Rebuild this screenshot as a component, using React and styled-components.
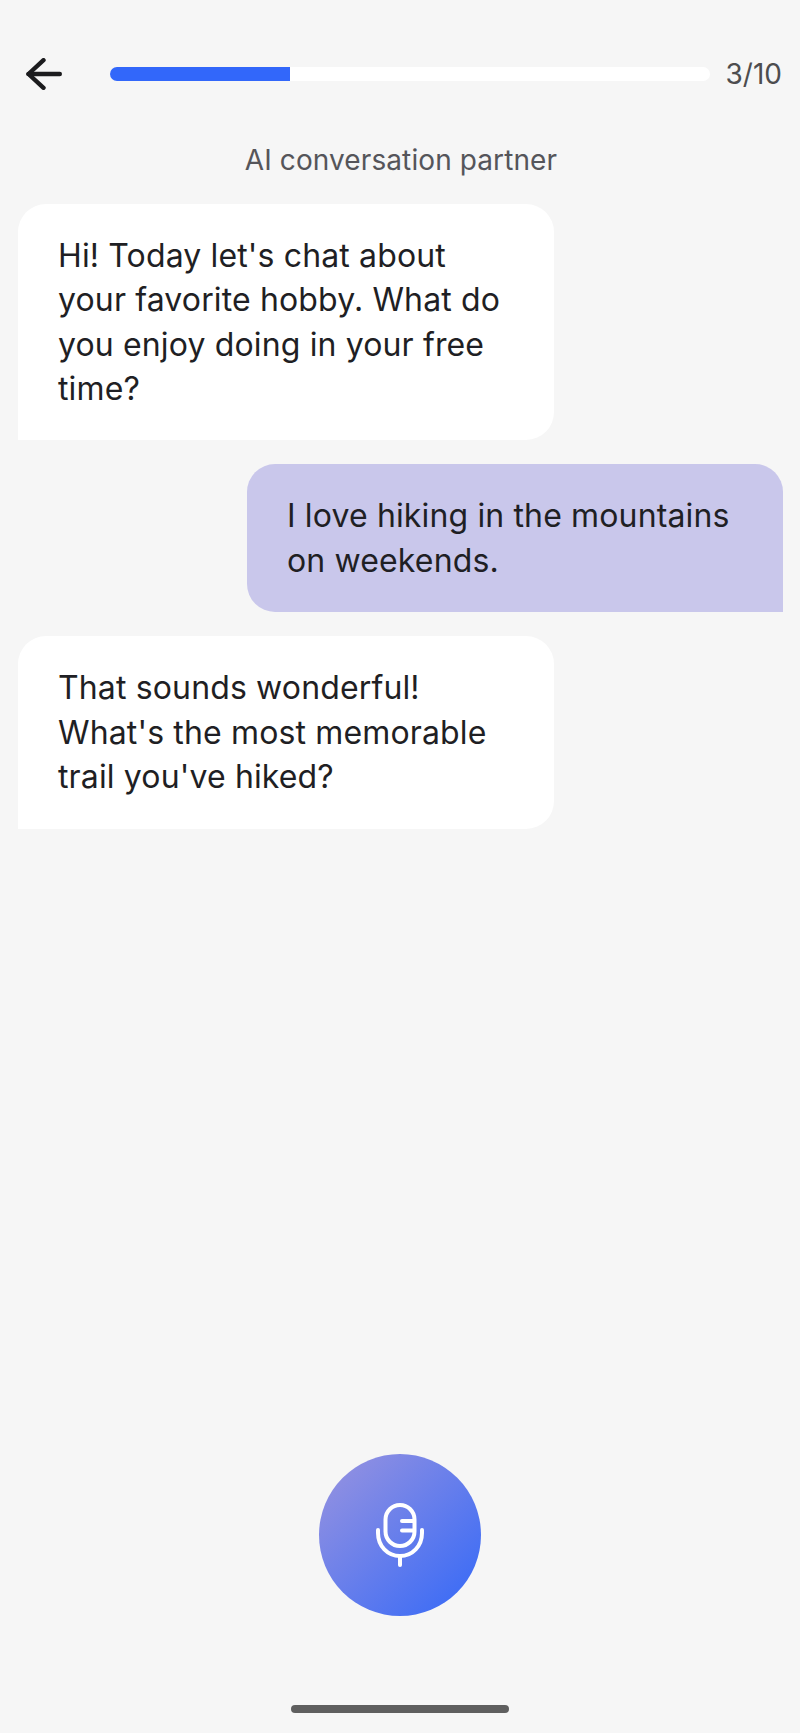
import React from "react";
import styled, { createGlobalStyle } from "styled-components";

const GlobalStyle = createGlobalStyle`
  html, body {
    margin: 0;
    padding: 0;
    background: #f6f6f6;
  }
  * {
    box-sizing: border-box;
  }
`;

const messages = [
  { id: 1, mine: false, text: "Hi! Today let's chat about your favorite hobby. What do you enjoy doing in your free time?" },
  { id: 2, mine: true, text: "I love hiking in the mountains on weekends." },
  { id: 3, mine: false, text: "That sounds wonderful! What's the most memorable trail you've hiked?" },
];

const App = () => {
  return (
    <Page>
      <GlobalStyle />
      <TopBar>
        <BackButton aria-label="back">
          <svg width="36" height="32" viewBox="0 0 36 32" fill="none" stroke="#1c1c1e" strokeWidth="4.4" strokeLinecap="round" strokeLinejoin="round">
            <path d="M2.5 16H33.8" />
            <path d="M17.5 2.2L2.5 16L17.5 29.8" />
          </svg>
        </BackButton>
        <Track>
          <Fill style={{ width: `${(3 / 10) * 100}%` }} />
        </Track>
        <Counter>3/10</Counter>
      </TopBar>
      <Subtitle>AI conversation partner</Subtitle>
      <ChatList>
        {messages.map((item) => (
          <Bubble key={item.id} $mine={item.mine}>
            {item.text}
          </Bubble>
        ))}
      </ChatList>
      <MicArea>
        <MicButton aria-label="record">
          <svg width="48" height="64" viewBox="0 0 48 64" fill="none" stroke="#ffffff" strokeWidth="4" strokeLinecap="round" strokeLinejoin="round">
            <rect x="9.5" y="2" width="29" height="41" rx="14.5" />
            <path d="M26 18H38M26 27.5H38" />
            <path d="M2 27V30C2 43 11.5 53 24 53C36.5 53 46 43 46 30V27" />
            <path d="M24 53V62" />
          </svg>
        </MicButton>
      </MicArea>
      <HomeBar />
    </Page>
  );
};

const Page = styled.div`
  width: 800px;
  height: 1733px;
  background: #f6f6f6;
  display: flex;
  flex-direction: column;
  padding: 0 18px 20px 18px;
  font-family: Inter, "Liberation Sans", sans-serif;
  color: #1f1f24;
`;
const TopBar = styled.div`
  display: flex;
  align-items: center;
  height: 40px;
  margin-top: 54px;
`;
const BackButton = styled.button`
  width: 92px;
  height: 32px;
  padding: 0 0 0 8px;
  border: none;
  background: none;
  display: flex;
  align-items: center;
`;
const Track = styled.div`
  flex: 1;
  height: 14px;
  background: #ffffff;
  border-radius: 7px;
  overflow: hidden;
`;
const Fill = styled.div`
  height: 100%;
  background: #3267fa;
`;
const Counter = styled.div`
  width: 72px;
  text-align: right;
  font-size: 28px;
  color: #4d4d4f;
`;
const Subtitle = styled.div`
  margin-top: 49px;
  padding-left: 2px;
  text-align: center;
  font-size: 28px;
  line-height: 34px;
  letter-spacing: 0.1px;
  color: #55555a;
`;
const ChatList = styled.div`
  display: flex;
  flex-direction: column;
  gap: 24px;
  margin: 27px -1px 0 0;
`;
const Bubble = styled.div`
  width: 536px;
  padding: 30px 40px 29.3px 40px;
  font-size: 32px;
  line-height: 44.3px;
  letter-spacing: 0.14px;
  color: #1f1f24;
  align-self: ${(props) => (props.$mine ? "flex-end" : "flex-start")};
  background: ${(props) => (props.$mine ? "#c9c7eb" : "#ffffff")};
  border-radius: ${(props) => (props.$mine ? "28px 28px 0 28px" : "28px 28px 28px 0")};
`;
const MicArea = styled.div`
  flex: 1;
  display: flex;
  justify-content: center;
  align-items: flex-end;
`;
const MicButton = styled.button`
  width: 162px;
  height: 162px;
  border: none;
  border-radius: 50%;
  padding: 0;
  background: linear-gradient(135deg, #9a94df 0%, #3368f8 100%);
  display: flex;
  align-items: center;
  justify-content: center;
`;
const HomeBar = styled.div`
  width: 218px;
  height: 8px;
  margin: 89px auto 0;
  border-radius: 4px;
  background: #5f5f5f;
`;

export default App;
